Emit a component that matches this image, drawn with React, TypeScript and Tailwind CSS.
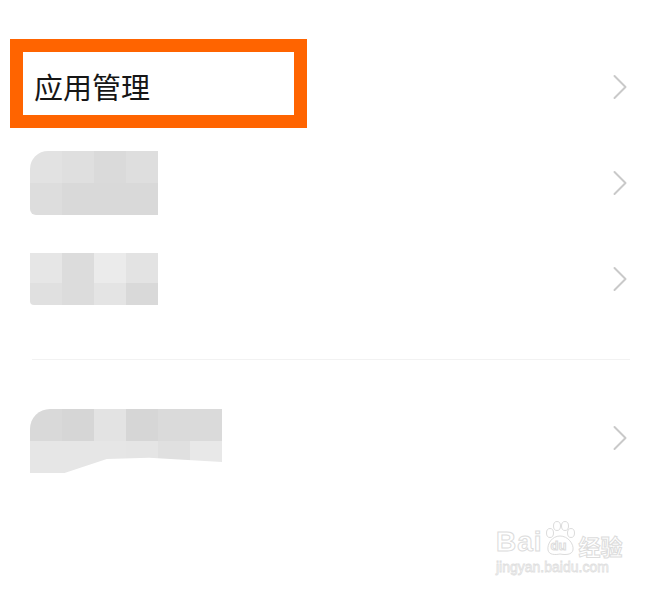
import React from "react";

// ── Chevron ───────────────────────────────────────────────────────────────────

function Chevron() {
  return (
    <svg width="16" height="26" viewBox="0 0 16 26" className="shrink-0">
      <polyline
        points="2.5,2 13.5,13 2.5,24"
        fill="none"
        stroke="#c9c9c9"
        strokeWidth="2"
        strokeLinecap="round"
        strokeLinejoin="round"
      />
    </svg>
  );
}

// ── Pixelated (mosaic) label ──────────────────────────────────────────────────

interface MosaicProps {
  rows: string[][];
  tileH: number[];
  className?: string;
}

function Mosaic({ rows, tileH, className }: MosaicProps) {
  return (
    <div className={"flex flex-col overflow-hidden " + (className ?? "")}>
      {rows.map((row, r) => (
        <div key={r} className="flex">
          {row.map((c, i) => (
            <div key={i} className="w-8 shrink-0" style={{ height: tileH[r], backgroundColor: c }} />
          ))}
        </div>
      ))}
    </div>
  );
}

// ── Watermark ─────────────────────────────────────────────────────────────────

function Watermark() {
  return (
    <div className="absolute left-[496px] top-[516px] flex flex-col items-start font-['Liberation_Sans',sans-serif] select-none">
      <div className="flex items-end h-[40px]">
        <span className="text-[28px] leading-none font-bold text-transparent [-webkit-text-stroke:1px_#dcdcdc] tracking-[1px]">
          Bai
        </span>
        <div className="relative w-[36px] h-[36px] -ml-[1px]">
          <svg width="36" height="36" viewBox="0 0 36 36" className="absolute inset-0">
            <g fill="none" stroke="#dcdcdc" strokeWidth="1">
              <ellipse cx="8" cy="13" rx="3.5" ry="4.5" />
              <ellipse cx="15" cy="6" rx="3.5" ry="4.5" />
              <ellipse cx="23" cy="6" rx="3.5" ry="4.5" />
              <ellipse cx="29" cy="13" rx="3.5" ry="4.5" />
              <path d="M18 16 C10 16 5 24 6 30 C7 35 13 35 18 34 C23 35 30 35 31 30 C32 24 26 16 18 16 Z" />
            </g>
          </svg>
          <span className="absolute left-[9px] top-[19px] text-[13px] leading-none font-bold text-transparent [-webkit-text-stroke:1px_#dcdcdc]">
            du
          </span>
        </div>
        <span className="ml-[1px] text-[22px] leading-none text-transparent [-webkit-text-stroke:1px_#dcdcdc] font-['Noto_Sans_CJK_SC',sans-serif] font-bold">
          经验
        </span>
      </div>
      <span className="mt-[4px] text-[14px] leading-none text-transparent [-webkit-text-stroke:0.8px_#e0e0e0]">
        jingyan.baidu.com
      </span>
    </div>
  );
}

// ── Main ──────────────────────────────────────────────────────────────────────

export default function App() {
  return (
    <div className="relative w-[649px] h-[589px] bg-white overflow-hidden">
      <div className="pt-[39px] flex flex-col">
        {/* Row 1 — highlighted */}
        <div className="h-[96px] flex items-center justify-between pl-[10px] pr-[21px]">
          <div className="w-[297px] h-[89px] -mt-[7px] border-[13px] border-[#ff6400] flex items-center pl-[11px] pt-[5px]">
            <span className="text-[29px] leading-none text-[#161616] font-['Noto_Sans_CJK_SC',sans-serif]">
              应用管理
            </span>
          </div>
          <Chevron />
        </div>

        {/* Row 2 */}
        <div className="h-[96px] flex items-center justify-between pl-[30px] pr-[21px]">
          <Mosaic
            className="rounded-tl-[18px] rounded-bl-[6px]"
            tileH={[32, 32]}
            rows={[
              ["#e2e2e2", "#dfdfdf", "#dadada", "#dedede"],
              ["#dddddd", "#d9d9d9", "#d9d9d9", "#d9d9d9"],
            ]}
          />
          <Chevron />
        </div>

        {/* Row 3 */}
        <div className="h-[96px] flex items-center justify-between pl-[30px] pr-[21px]">
          <Mosaic
            className="rounded-bl-[4px]"
            tileH={[30, 22]}
            rows={[
              ["#e6e6e6", "#dcdcdc", "#ebebeb", "#e3e3e3"],
              ["#e0e0e0", "#dcdcdc", "#e4e4e4", "#d9d9d9"],
            ]}
          />
          <Chevron />
        </div>

        {/* Divider */}
        <div className="mt-[32px] ml-[32px] mr-[19px] h-px bg-[#f2f2f2]" />

        {/* Row 4 */}
        <div className="mt-[30px] h-[96px] flex items-center justify-between pl-[30px] pr-[21px]">
          <Mosaic
            className="mt-[6px] rounded-tl-[20px] [clip-path:polygon(0_0,100%_0,100%_83%,62%_76%,40%_78%,18%_100%,0_100%)]"
            tileH={[32, 32]}
            rows={[
              ["#d9d9d9", "#d6d6d6", "#e3e3e3", "#d6d6d6", "#dadada", "#dadada"],
              ["#e6e6e6", "#e6e6e6", "#e6e6e6", "#e5e5e5", "#e0e0e0", "#e8e8e8"],
            ]}
          />
          <Chevron />
        </div>
      </div>

      <Watermark />
    </div>
  );
}
